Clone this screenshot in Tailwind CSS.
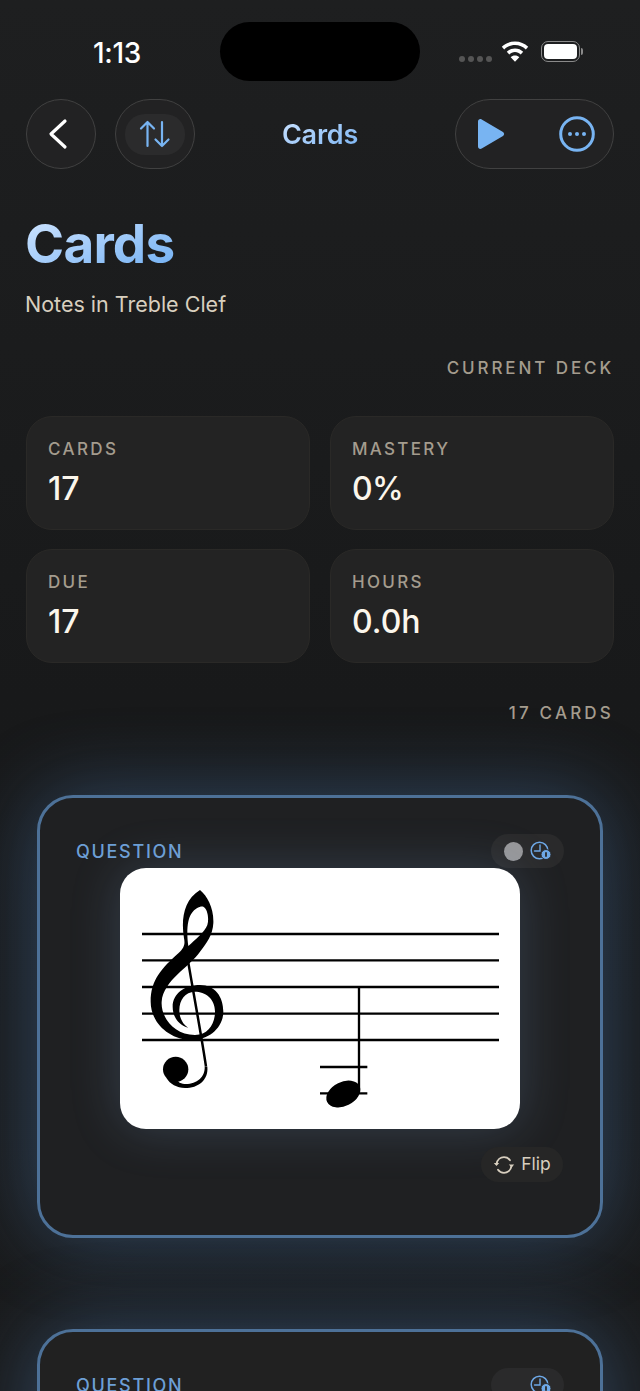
<!DOCTYPE html>
<html lang="en">
<head>
    <meta charset="UTF-8">
    <meta name="viewport" content="width=device-width, initial-scale=1.0">
    <title>Cards</title>
    <script src="https://cdn.jsdelivr.net/npm/@tailwindcss/browser@4"></script>
</head>
<body class="h-[1391px] overflow-hidden bg-linear-to-b from-[#1e1f20] via-[#18191a] to-[#1a1b1c] font-['Inter',sans-serif] text-[#f7f2e8]">

    <!-- status bar -->
    <div class="relative h-[99px]">
        <span class="absolute left-[93px] top-[38px] text-[28px] leading-[30px] font-medium tracking-[-0.3px] text-white">1:13</span>
        <div class="absolute left-[220px] top-[22px] h-[59px] w-[200px] rounded-[30px] bg-black"></div>
        <div class="absolute left-[459px] top-[56px] flex gap-[3px]">
            <span class="size-[6px] rounded-full bg-[#555]"></span>
            <span class="size-[6px] rounded-full bg-[#555]"></span>
            <span class="size-[6px] rounded-full bg-[#555]"></span>
            <span class="size-[6px] rounded-full bg-[#555]"></span>
        </div>
        <svg class="absolute left-[501px] top-[41px]" width="28" height="22" viewBox="0 0 28 22" fill="white">
            <path d="M14 0.5C8.8 0.5 4.2 2.5 0.8 5.8L3.2 8.4C6 5.7 9.8 4 14 4s8 1.700 10.800 4.400l2.400-2.600C23.800 2.500 19.200 0.500 14 0.500z"/>
            <path d="M14 7.500c-3.200 0-6.100 1.200-8.200 3.300l2.500 2.600C9.800 12 11.800 11 14 11s4.200 1 5.700 2.400l2.500-2.600C20.100 8.700 17.200 7.500 14 7.500z"/>
            <path d="M14 14.500c-1.700 0-3.200 0.600-4.300 1.700L14 20.800l4.300-4.600c-1.100-1.100-2.600-1.700-4.300-1.700z"/>
        </svg>
        <div class="absolute left-[541px] top-[41px] flex h-[21px] w-[39px] items-center rounded-[7px] border-[1.5px] border-[#8a8a8a] p-[2px]">
            <div class="h-full w-full rounded-[4px] bg-white"></div>
        </div>
        <div class="absolute left-[581px] top-[48px] h-[7px] w-[2px] rounded-r-full bg-[#8a8a8a]"></div>
    </div>

    <div class="px-[26px]">
        <!-- nav -->
        <div class="grid h-[70px] grid-cols-[1fr_auto_1fr] items-center">
            <div class="flex gap-[19px]">
                <button class="flex h-[70px] w-[70px] items-center justify-center rounded-full border-[1.5px] border-[#414141] bg-[#222223] pr-[6px]">
                    <svg width="20" height="32" viewBox="0 0 20 32" fill="none" stroke="white" stroke-width="3.200" stroke-linecap="round" stroke-linejoin="round"><path d="M17 3L3 16l14 13"/></svg>
                </button>
                <button class="flex h-[70px] w-[80px] items-center justify-center rounded-full border-[1.5px] border-[#414141] bg-[#222223]">
                    <span class="flex h-[41px] w-[60px] items-center justify-center rounded-[20px] bg-[#2b2b2c]">
                        <svg width="32" height="28" viewBox="0 0 32 28" fill="none" stroke="#78b4f2" stroke-width="2.200" stroke-linecap="round" stroke-linejoin="round"><path d="M8.500 26V2M2 8.500L8.500 2l6.500 6.500"/><path d="M23 2v24M16.500 19.500L23 26l6.500-6.500"/></svg>
                    </span>
                </button>
            </div>
            <h1 class="bg-linear-to-br from-[#cfe4ff] to-[#74b1f2] bg-clip-text pt-[2px] text-[27px] font-semibold tracking-[-0.2px] text-transparent">Cards</h1>
            <div class="flex justify-end">
                <div class="flex h-[70px] w-[159px] items-center justify-between rounded-full border-[1.5px] border-[#414141] bg-[#222223] pl-[21px] pr-[18px]">
                    <svg width="28" height="32" viewBox="0 0 28 32" fill="#78b4f2"><path d="M1 3.500C1 1.500 3 0.500 4.700 1.500L26 14c1.500 0.900 1.500 3.100 0 4L4.700 30.500C3 31.500 1 30.500 1 28.500z"/></svg>
                    <svg width="36" height="36" viewBox="0 0 36 36" fill="none"><circle cx="18" cy="18" r="16.300" stroke="#78b4f2" stroke-width="3"/><circle cx="11" cy="18" r="2" fill="#78b4f2"/><circle cx="18" cy="18" r="2" fill="#78b4f2"/><circle cx="25" cy="18" r="2" fill="#78b4f2"/></svg>
                </div>
            </div>
        </div>

        <!-- heading -->
        <h2 class="-ml-px mt-[45px] w-fit bg-linear-to-br from-[#d2e6ff] to-[#6eaef2] bg-clip-text text-[53px] leading-[60px] font-bold tracking-[-0.8px] text-transparent">Cards</h2>
        <p class="-ml-px mt-[16px] text-[21.500px] leading-[28px] text-[#d8cfbf]">Notes in Treble Clef</p>

        <p class="mt-[39px] text-right text-[17px] leading-[22px] font-medium tracking-[2.900px] text-[#a49c8e]">CURRENT DECK</p>

        <!-- stats -->
        <div class="mt-[37px] grid grid-cols-2 gap-x-[20px] gap-y-[19px]">
            <div class="h-[114px] rounded-[26px] border border-[#2a2927] bg-[#232323] pl-[21px] pt-[21px]">
                <p class="text-[17px] leading-[22px] font-medium tracking-[2.400px] text-[#a49c8e]">CARDS</p>
                <p class="mt-[9px] text-[32px] leading-[40px] font-medium text-[#fbf6ec]">17</p>
            </div>
            <div class="h-[114px] rounded-[26px] border border-[#2a2927] bg-[#232323] pl-[21px] pt-[21px]">
                <p class="text-[17px] leading-[22px] font-medium tracking-[2.300px] text-[#a49c8e]">MASTERY</p>
                <p class="mt-[9px] text-[32px] leading-[40px] font-medium tracking-[-0.6px] text-[#fbf6ec]">0%</p>
            </div>
            <div class="h-[114px] rounded-[26px] border border-[#2a2927] bg-[#232323] pl-[21px] pt-[21px]">
                <p class="text-[17px] leading-[22px] font-medium tracking-[2.300px] text-[#a49c8e]">DUE</p>
                <p class="mt-[9px] text-[32px] leading-[40px] font-medium text-[#fbf6ec]">17</p>
            </div>
            <div class="h-[114px] rounded-[26px] border border-[#2a2927] bg-[#232323] pl-[21px] pt-[21px]">
                <p class="text-[17px] leading-[22px] font-medium tracking-[2.300px] text-[#a49c8e]">HOURS</p>
                <p class="mt-[9px] text-[32px] leading-[40px] font-medium text-[#fbf6ec]">0.0h</p>
            </div>
        </div>

        <p class="mt-[39px] text-right text-[17px] leading-[22px] font-medium tracking-[3.200px] text-[#a49c8e]">17 CARDS</p>

        <!-- card 1 -->
        <div class="mx-[11px] mt-[71px] flex h-[443px] flex-col rounded-[36px] border-[3px] border-[#4d7198] bg-[#1f2022] pt-[36px] shadow-[0_0_80px_rgba(84,140,205,0.4)]">
            <div class="flex h-[34px] items-center justify-between pl-[36px] pr-[36px]">
                <span class="text-[18px] font-medium tracking-[1.700px] text-[#6d9fd6]">QUESTION</span>
                <div class="flex h-[34px] w-[73px] items-center gap-[7px] rounded-full bg-[#2a2a2b] pl-[13px]">
                    <span class="size-[19px] rounded-full bg-[#979799]"></span>
                    <svg width="22" height="20" viewBox="0 0 22 20" fill="none">
                        <circle cx="9.500" cy="9.500" r="8.300" stroke="#6ea8e6" stroke-width="1.500"/>
                        <path d="M10 4v6H4.500" stroke="#6ea8e6" stroke-width="1.400" stroke-linecap="round"/>
                        <circle cx="16" cy="13.500" r="5" fill="#6ea8e6" stroke="#2a2a2b"/>
                        <path d="M16 11.200v4.600" stroke="#2a2a2b" stroke-width="1.800"/>
                    </svg>
                </div>
            </div>
            <div class="mx-auto h-[261px] w-[400px] overflow-hidden rounded-[26px] bg-white shadow-[0_0_50px_rgba(130,175,225,0.22)]">
                <svg width="400" height="261" viewBox="0 24 1200 783" fill="none">
                    <g stroke="#000" stroke-width="7">
                        <path d="M66 222H1137M66 301H1137M66 381H1137M66 461H1137M66 540H1137"/>
                        <path d="M600 621H742M600 700H742"/>
                        <path d="M717 381V690"/>
                    </g>
                    <ellipse cx="670" cy="702" rx="54" ry="36" transform="rotate(-26 670 702)" fill="#000"/>
                    <path fill="#000" fill-rule="evenodd" d="M240 90C262 108 282 145 280 190C278 225 260 250 240 275C210 320 130 360 125 425C122 470 160 525 225 525C265 525 285 490 285 455C285 415 255 395 225 395C195 395 178 420 178 450C178 475 190 495 205 503C175 495 158 470 158 440C158 400 195 375 240 375C285 375 310 410 310 455C310 500 270 540 215 540C150 540 92 490 92 425C92 360 125 325 175 280C195 262 195 250 192 235C183 180 190 120 240 90ZM250 140C262 145 268 175 262 195C255 215 225 240 205 258C200 225 200 180 215 160C225 145 240 138 250 140Z"/>
                    <path stroke="#000" stroke-width="7.500" d="M202 290C215 370 245 530 258 620"/>
                    <path fill="#000" d="M254 620H262C266 660 235 684 195 684C170 684 150 672 140 655L165 650C172 668 185 672 198 672C230 672 256 650 254 620Z"/>
                    <circle cx="167" cy="628" r="38" fill="#000"/>
                </svg>
            </div>
            <div class="mr-[37px] mt-[18px] flex h-[35px] w-[82px] items-center justify-center gap-[6px] self-end rounded-full bg-[#262626]">
                <svg width="22" height="20" viewBox="0 0 22 20" fill="none" stroke="#d8cfbf" stroke-width="1.800" stroke-linecap="round">
                    <path d="M3.500 9C4.200 4.800 7.500 2.200 11 2.200c2.500 0 4.700 1.100 6 3"/>
                    <path d="M18.500 11c-0.700 4.200-4 6.800-7.500 6.800-2.500 0-4.700-1.100-6-3"/>
                    <path d="M0.800 8l2.700 2.900L6.200 8z" fill="#d8cfbf" stroke="none"/>
                    <path d="M15.800 9.500l2.700 2.900 2.700-2.900z" fill="#d8cfbf" stroke="none"/>
                </svg>
                <span class="text-[17.500px] text-[#d8cfbf]">Flip</span>
            </div>
        </div>

        <!-- card 2, runs off the bottom -->
        <div class="mx-[11px] mt-[91px] h-[443px] rounded-[36px] border-[3px] border-[#4d7198] bg-[#212121] pt-[36px] shadow-[0_0_80px_rgba(84,140,205,0.4)]">
            <div class="flex h-[34px] items-center justify-between pl-[36px] pr-[36px]">
                <span class="text-[18px] font-medium tracking-[1.700px] text-[#6d9fd6]">QUESTION</span>
                <div class="flex h-[34px] w-[73px] items-center justify-end rounded-full bg-[#2a2a2b] pr-[12px]">
                    <svg width="22" height="20" viewBox="0 0 22 20" fill="none">
                        <circle cx="9.500" cy="9.500" r="8.300" stroke="#6ea8e6" stroke-width="1.500"/>
                        <path d="M10 4v6H4.500" stroke="#6ea8e6" stroke-width="1.400" stroke-linecap="round"/>
                        <circle cx="16" cy="13.500" r="5" fill="#6ea8e6" stroke="#2a2a2b"/>
                        <path d="M16 11.200v4.600" stroke="#2a2a2b" stroke-width="1.800"/>
                    </svg>
                </div>
            </div>
        </div>
    </div>

</body>
</html>
